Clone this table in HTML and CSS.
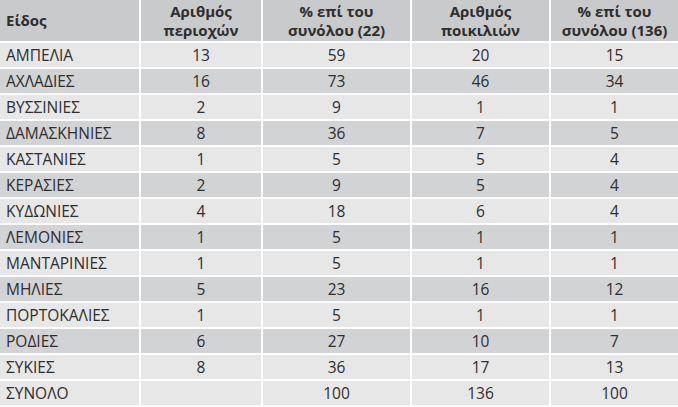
FILE: index.html
```html
<!DOCTYPE html>
<html lang="el">
<head>
<meta charset="utf-8">
<link rel="stylesheet" href="styles.css">
</head>
<body>
<div class="table">
  <div class="row head">
    <div class="cell name">Είδος</div>
    <div class="cell">Αριθμός<br>περιοχών</div>
    <div class="cell">% επί του<br>συνόλου (22)</div>
    <div class="cell">Αριθμός<br>ποικιλιών</div>
    <div class="cell">% επί του<br>συνόλου (136)</div>
  </div>
  <div class="row light"><div class="cell name">ΑΜΠΕΛΙΑ</div><div class="cell">13</div><div class="cell">59</div><div class="cell">20</div><div class="cell">15</div></div>
  <div class="row dark"><div class="cell name">ΑΧΛΑΔΙΕΣ</div><div class="cell">16</div><div class="cell">73</div><div class="cell">46</div><div class="cell">34</div></div>
  <div class="row light"><div class="cell name">ΒΥΣΣΙΝΙΕΣ</div><div class="cell">2</div><div class="cell">9</div><div class="cell">1</div><div class="cell">1</div></div>
  <div class="row dark"><div class="cell name">ΔΑΜΑΣΚΗΝΙΕΣ</div><div class="cell">8</div><div class="cell">36</div><div class="cell">7</div><div class="cell">5</div></div>
  <div class="row light"><div class="cell name">ΚΑΣΤΑΝΙΕΣ</div><div class="cell">1</div><div class="cell">5</div><div class="cell">5</div><div class="cell">4</div></div>
  <div class="row dark"><div class="cell name">ΚΕΡΑΣΙΕΣ</div><div class="cell">2</div><div class="cell">9</div><div class="cell">5</div><div class="cell">4</div></div>
  <div class="row light"><div class="cell name">ΚΥΔΩΝΙΕΣ</div><div class="cell">4</div><div class="cell">18</div><div class="cell">6</div><div class="cell">4</div></div>
  <div class="row dark"><div class="cell name">ΛΕΜΟΝΙΕΣ</div><div class="cell">1</div><div class="cell">5</div><div class="cell">1</div><div class="cell">1</div></div>
  <div class="row light"><div class="cell name">ΜΑΝΤΑΡΙΝΙΕΣ</div><div class="cell">1</div><div class="cell">5</div><div class="cell">1</div><div class="cell">1</div></div>
  <div class="row dark"><div class="cell name">ΜΗΛΙΕΣ</div><div class="cell">5</div><div class="cell">23</div><div class="cell">16</div><div class="cell">12</div></div>
  <div class="row light"><div class="cell name">ΠΟΡΤΟΚΑΛΙΕΣ</div><div class="cell">1</div><div class="cell">5</div><div class="cell">1</div><div class="cell">1</div></div>
  <div class="row dark"><div class="cell name">ΡΟΔΙΕΣ</div><div class="cell">6</div><div class="cell">27</div><div class="cell">10</div><div class="cell">7</div></div>
  <div class="row light"><div class="cell name">ΣΥΚΙΕΣ</div><div class="cell">8</div><div class="cell">36</div><div class="cell">17</div><div class="cell">13</div></div>
  <div class="row light"><div class="cell name">ΣΥΝΟΛΟ</div><div class="cell"></div><div class="cell">100</div><div class="cell">136</div><div class="cell">100</div></div>
</div>
</body>
</html>
```
FILE: styles.css
```css
html, body {
  margin: 0;
  padding: 0;
  background: #ffffff;
}
body {
  font-family: "Open Sans", "Noto Sans", sans-serif;
  font-size: 15.5px;
  color: #2e2e2e;
}
.table {
  display: flex;
  flex-direction: column;
  gap: 2px;
  width: 678px;
}
.row {
  display: grid;
  grid-template-columns: 139px 120px 147px 137px 1fr;
  column-gap: 2px;
  height: 24px;
}
.row.head {
  height: 41px;
}
.cell {
  display: flex;
  align-items: center;
  justify-content: center;
  text-align: center;
  line-height: 18px;
  white-space: nowrap;
}
.cell.name {
  justify-content: flex-start;
  padding-left: 6px;
}
.head .cell {
  background: #c9cacb;
  font-weight: 700;
  font-size: 15px;
  line-height: 19px;
}
.light .cell {
  background: #e7e7e7;
}
.dark .cell {
  background: #d2d3d4;
}
```
